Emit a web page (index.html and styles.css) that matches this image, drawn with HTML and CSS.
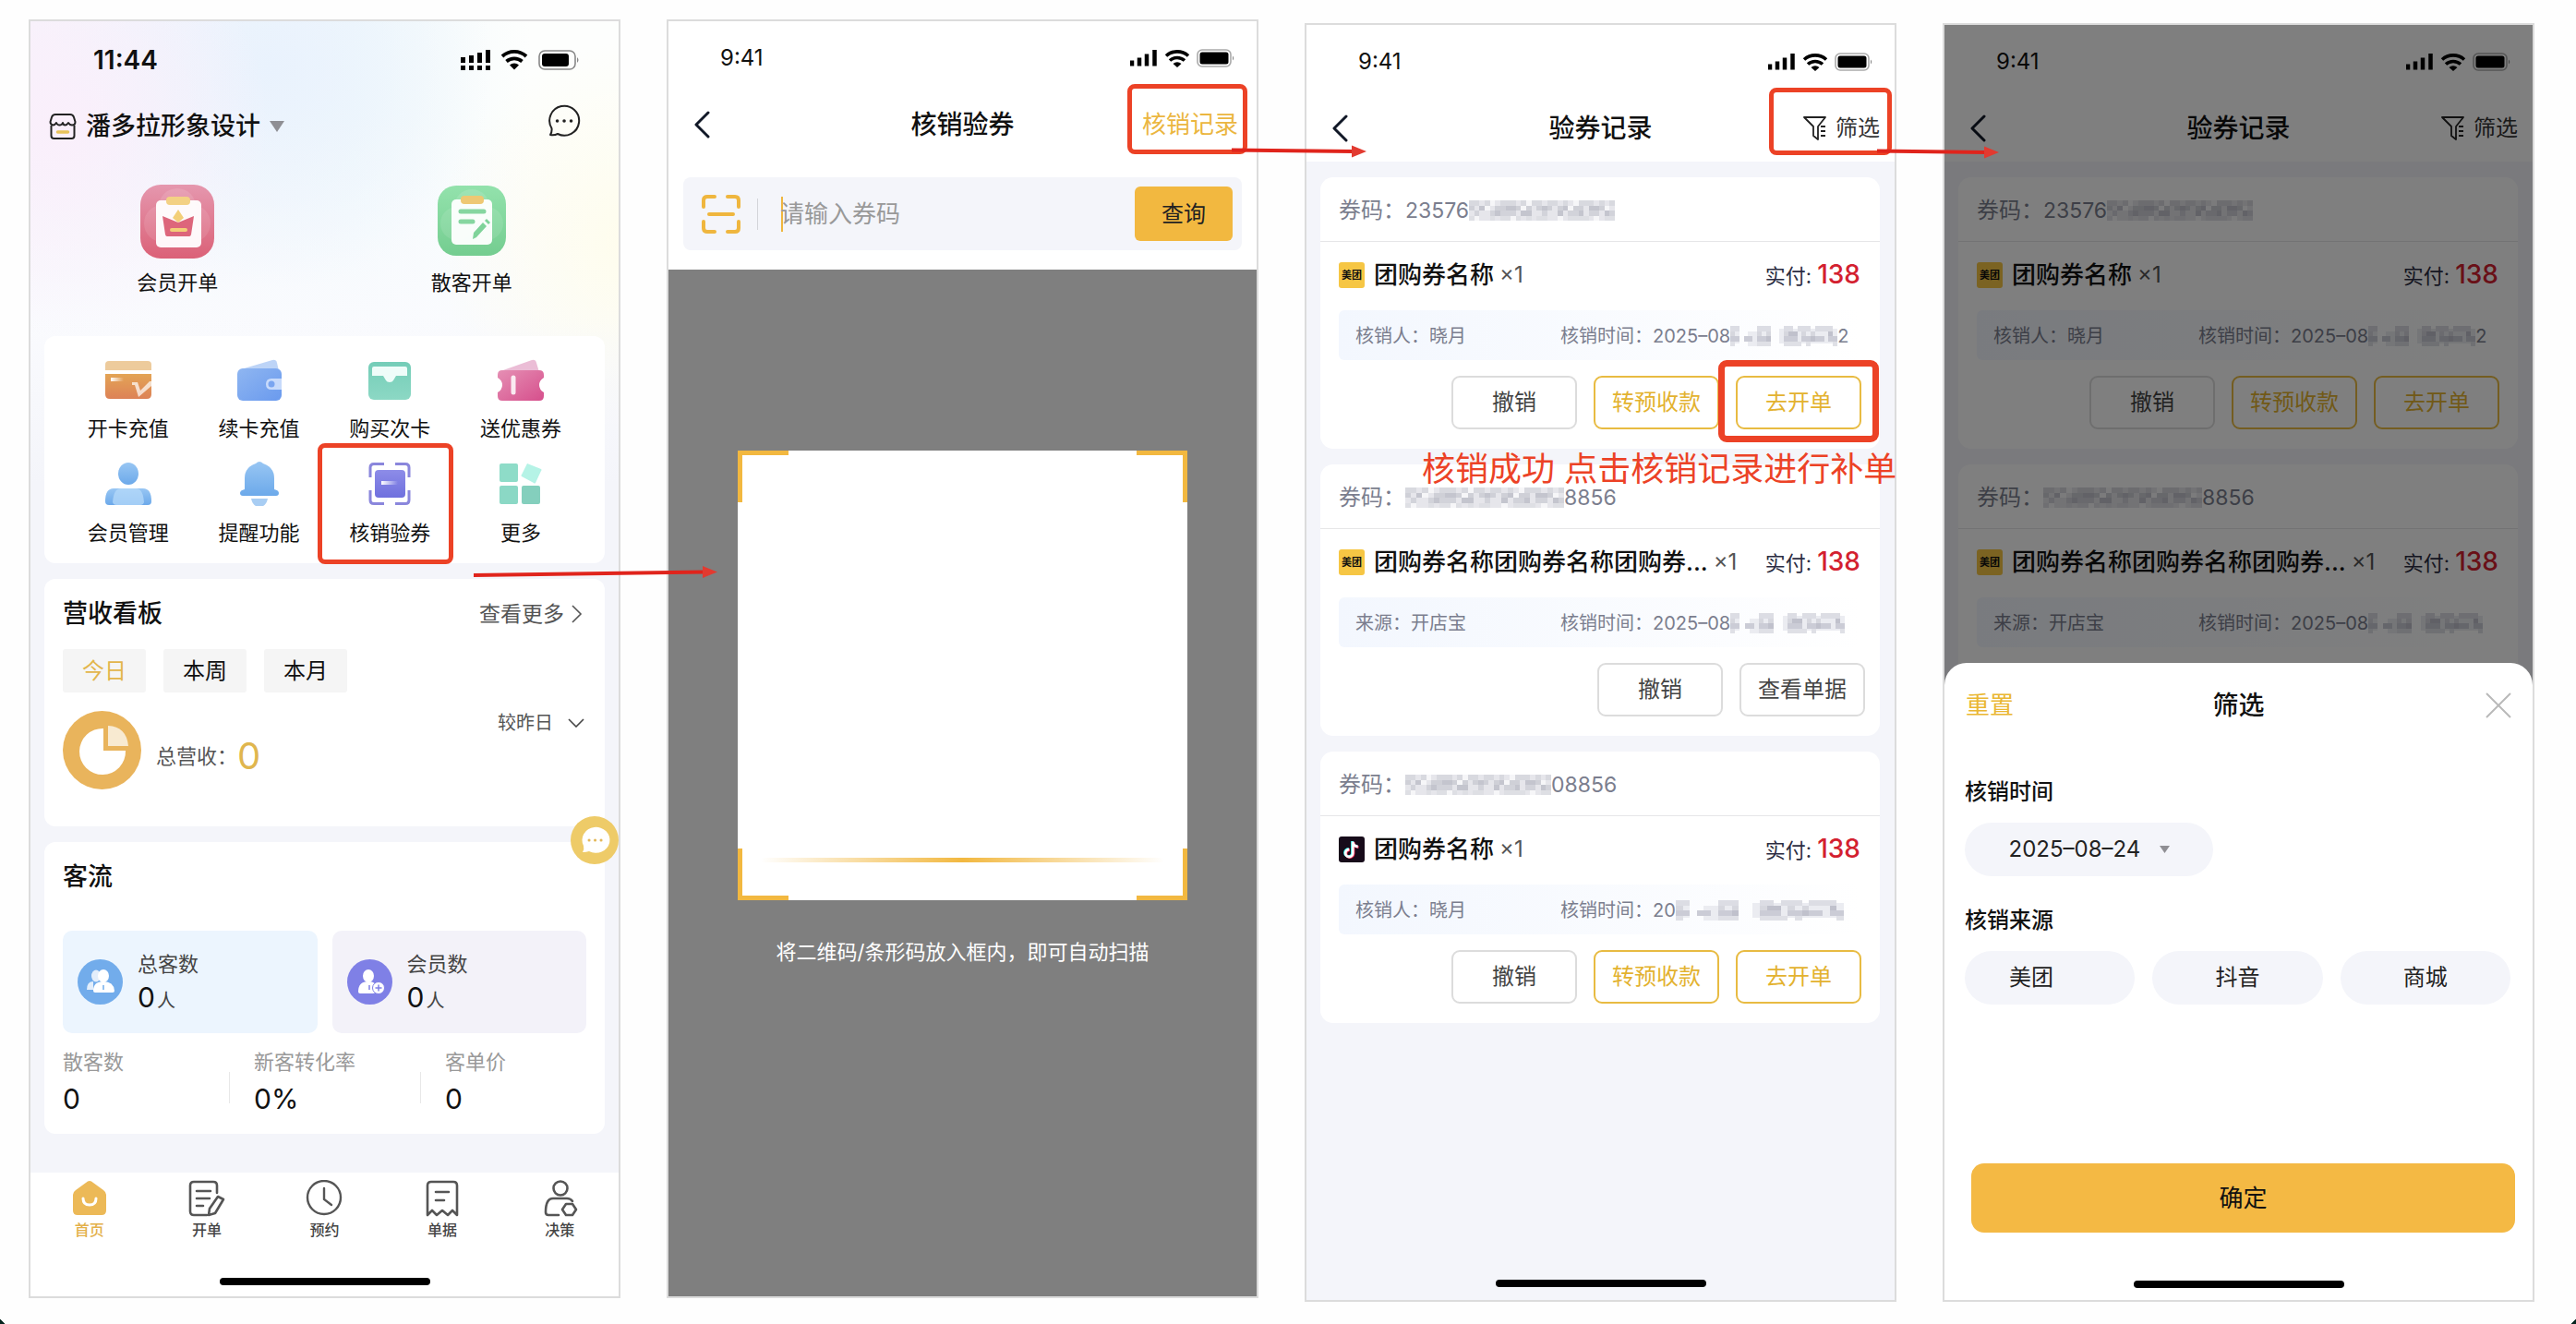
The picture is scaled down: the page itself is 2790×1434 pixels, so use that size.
FILE: index.html
```html
<!DOCTYPE html>
<html lang="zh-CN">
<head>
<meta charset="utf-8">
<meta name="viewport" content="width=device-width, initial-scale=1">
<title>核销验券流程</title>
<link rel="stylesheet" href="styles.css">
</head>
<body>
<svg class="sprite" aria-hidden="true">
  <defs>
    <linearGradient id="g-red" x1="0" y1="0" x2="0" y2="1"><stop offset="0" stop-color="#e597ae"/><stop offset="1" stop-color="#db6177"/></linearGradient>
    <linearGradient id="g-green" x1="0" y1="0" x2="0" y2="1"><stop offset="0" stop-color="#93e2ac"/><stop offset="1" stop-color="#74cd90"/></linearGradient>
    <linearGradient id="g-orange" x1="0" y1="0" x2="0" y2="1"><stop offset="0" stop-color="#e3a455"/><stop offset="1" stop-color="#dd8257"/></linearGradient>
    <linearGradient id="g-blue" x1="0" y1="0" x2="1" y2="1"><stop offset="0" stop-color="#8fb6f1"/><stop offset="1" stop-color="#6a9aee"/></linearGradient>
    <linearGradient id="g-teal" x1="0" y1="0" x2="0" y2="1"><stop offset="0" stop-color="#74cdb8"/><stop offset="1" stop-color="#8cd8c4"/></linearGradient>
    <linearGradient id="g-pink" x1="0" y1="0" x2="1" y2="1"><stop offset="0" stop-color="#e58fb4"/><stop offset="1" stop-color="#d64f8c"/></linearGradient>
    <linearGradient id="g-sky" x1="0" y1="0" x2="0" y2="1"><stop offset="0" stop-color="#98c6f3"/><stop offset="1" stop-color="#6ca9ea"/></linearGradient>
    <linearGradient id="g-violet" x1="0" y1="0" x2="0" y2="1"><stop offset="0" stop-color="#8d8ce8"/><stop offset="1" stop-color="#6f70de"/></linearGradient>
    <linearGradient id="g-fade" x1="0" y1="0" x2="1" y2="0"><stop offset="0" stop-color="#fff"/><stop offset="1" stop-color="#fff" stop-opacity="0"/></linearGradient>
  </defs>
  <symbol id="i-status" viewBox="0 0 114 20">
    <path d="M2 12.500v6M10 9.500v9M18 5.500v13M26.500 1v17.500" stroke="#000" stroke-width="4.500" fill="none"/>
    <path d="M39 7.500a18 18 0 0 1 24 0M43 12.500a12 12 0 0 1 16 0" stroke="#000" stroke-width="3.600" fill="none"/>
    <path d="M46.500 16a7 7 0 0 1 9 0L51 20z"/>
    <rect x="73" y="1" width="36" height="18" rx="5" fill="none" stroke="#aaa" stroke-width="1.600"/>
    <rect x="75.500" y="3.500" width="31" height="13" rx="2.500"/>
    <path d="M111 7.500q2.500 2.500 0 5z" fill="#888"/>
  </symbol>
  <symbol id="i-back" viewBox="0 0 18 30"><path d="M16 2 3 15l13 13" fill="none" stroke="#111827" stroke-width="3" stroke-linecap="round" stroke-linejoin="round"/></symbol>
  <symbol id="i-filter" viewBox="0 0 26 28"><path d="M1 2h23l-8 10v14l-5-4V12zM19 12h5M19 17h5M19 22h5" fill="none" stroke="#222" stroke-width="1.800" stroke-linejoin="round"/></symbol>
  <symbol id="i-meituan" viewBox="0 0 28 28">
    <rect width="28" height="28" rx="3" fill="#f6c644"/>
  </symbol>
  <symbol id="i-douyin" viewBox="0 0 28 28">
    <rect width="28" height="28" rx="3" fill="#170b1a"/>
    <g fill="none" stroke-width="2.800"><path d="M14.500 5v12.500a4 4 0 1 1-4-4M14.500 5.500q.5 4.500 5.500 5" stroke="#25f4ee"/><path d="M16 6v12.500a4 4 0 1 1-4-4M16 6.500q.5 4.500 5.500 5" stroke="#fe2c55"/><path d="M15.200 5.500V18a4 4 0 1 1-4-4M15.200 6q.5 4.500 5.500 5" stroke="#fff"/></g>
  </symbol>
  <symbol id="m-code" viewBox="0 0 28 4" preserveAspectRatio="none">
    <g fill="none" shape-rendering="crispEdges">
      <path d="M0 2h28" stroke="#e6e6eb" stroke-width="4"/>
      <path d="M0 .5h28" stroke="#d8d9df" stroke-dasharray="2 1 1 2 3 1 1 1 2 1"/>
      <path d="M0 1.500h28" stroke="#cfd0d7" stroke-dasharray="1 1 2 1 2 2 3 1 1 1"/>
      <path d="M1 2.500h27" stroke="#d2d3da" stroke-dasharray="1 2 1 1 3 1 2 2"/>
      <path d="M0 3.500h28" stroke="#dedfe4" stroke-dasharray="2 2 1 1 4 1 1 1"/>
      <path d="M2 1.500h26M5 2.500h22" stroke="#c4c5ce" stroke-dasharray="1 4 2 5 1 3"/>
      <path d="M4 .5h23M1 3.500h26M3 1.500h24" stroke="#f6f6f8" stroke-dasharray="1 6 1 8"/>
    </g>
  </symbol>
  <symbol id="m-time" viewBox="0 0 24 4" preserveAspectRatio="none">
    <g fill="none" shape-rendering="crispEdges">
      <path d="M0 2h2M4 2.500h5M11 2h13" stroke="#ebecf1" stroke-width="3"/>
      <path d="M0 .5h24" stroke="#dcdde4" stroke-dasharray="2 4 3 3 2 1 3 1 4 1"/>
      <path d="M0 1.500h24" stroke="#d6d7de" stroke-dasharray="1 5 1 1 1 3 3 1 1 1"/>
      <path d="M0 2.500h24" stroke="#cbccd6" stroke-dasharray="2 1 2 1 3 3 3 1 2 1"/>
      <path d="M0 3.500h24" stroke="#dfe0e6" stroke-dasharray="1 5 3 3 4 1"/>
      <path d="M8 2.500h1M13 1.500h2M18 2.500h1M22 1.500h1" stroke="#c0c1cc"/>
    </g>
  </symbol>
</svg>

<main class="board">

  <!-- 首页 -->
  <section class="phone phone--early home" aria-label="首页">
    <div class="status status--home">
      <span class="status__time status__time--bold">11:44</span>
      <svg width="130" height="24" viewBox="0 0 130 24" aria-hidden="true">
        <path d="M2.500 9v6M11.500 7v8M20.500 4v11M29.500 1v14" stroke="#000" stroke-width="5" stroke-linecap="butt"/>
        <path d="M2.500 18v5M11.500 18v5M20.500 18v5M29.500 18v5" stroke="#000" stroke-width="5"/>
        <path d="M45 8a19 19 0 0 1 26 0M49.500 13.500a13 13 0 0 1 17 0" stroke="#000" stroke-width="3.800" fill="none"/>
        <path d="M53 17.500a7 7 0 0 1 10 0L58 22.500z"/>
        <rect x="85" y="2" width="39" height="20" rx="6" fill="none" stroke="#888" stroke-width="1.600"/>
        <rect x="88" y="5" width="29" height="14" rx="3"/>
        <path d="M126 9q3 3 0 6z" fill="#888"/>
      </svg>
    </div>
    <div class="shop">
      <label class="shop__pick">
        <svg width="30" height="30" viewBox="0 0 30 30" fill="none" stroke="#222" stroke-width="2" stroke-linejoin="round" aria-hidden="true"><path d="M7 2h16q3 0 4 3l1.500 5q0 3.500-3.500 3.500-2.500 0-4-2.500-1.500 2.500-3.500 2.500T15 11q-1 2.500-3.500 2.500T8 11q-1.500 2.500-3.500 2.500Q1.500 13 1.500 10L3 5q1-3 4-3z"/><path d="M2.500 14v11q0 3 3 3h19q3 0 3-3V14"/><path d="M9.500 21h11" stroke="#e8c35c" stroke-width="3.500" stroke-linecap="round"/></svg>
        <select class="select shop__name" aria-label="门店"><option>潘多拉形象设计</option></select>
        <svg width="16" height="12" viewBox="0 0 16 12" aria-hidden="true"><path d="M0 0h16L8 12z" fill="#8f8f94"/></svg>
      </label>
      <button class="plain" aria-label="消息">
        <svg width="36" height="36" viewBox="0 0 36 36" fill="none" stroke="#222" stroke-width="2" stroke-linejoin="round"><path d="M3 33q2-3 1.500-7A16 16 0 1 1 11 32q-4 2-8 1z"/><path d="M10.500 18h.1M18 18h.1M25.500 18h.1" stroke-width="3.500" stroke-linecap="round"/></svg>
      </button>
    </div>
    <nav class="heroes" aria-label="开单">
      <a class="hero" href="#member">
        <svg width="80" height="80" viewBox="0 0 80 80" aria-hidden="true"><rect width="80" height="80" rx="22" fill="url(#g-red)"/><circle cx="40" cy="24" r="20" fill="#fff" opacity=".12"/><circle cx="24" cy="42" r="20" fill="#fff" opacity=".1"/><circle cx="56" cy="42" r="20" fill="#fff" opacity=".1"/><rect x="17" y="17" width="49" height="51" rx="5" fill="#fff" opacity=".95"/><rect x="28" y="13" width="26" height="9" rx="4" fill="#f3d184"/><path d="m41 27 6 9-6 5-6-5z" fill="#f3cf78"/><path d="M24 34l17 7 17-7-3 20q-.5 2-2 2H29q-1.500 0-2-2z" fill="#dd667b"/><path d="M34 49h15" stroke="#f3cf78" stroke-width="4" stroke-linecap="round"/></svg>
        <span class="label">会员开单</span>
      </a>
      <a class="hero" href="#walk-in">
        <svg width="80" height="80" viewBox="0 0 80 80" aria-hidden="true"><rect x="3" y="1" width="74" height="76" rx="20" fill="url(#g-green)"/><circle cx="40" cy="24" r="19" fill="#fff" opacity=".12"/><circle cx="24" cy="42" r="18" fill="#fff" opacity=".1"/><circle cx="56" cy="42" r="18" fill="#fff" opacity=".1"/><rect x="18" y="16" width="44" height="49" rx="5" fill="#fff" opacity=".95"/><rect x="28" y="12" width="25" height="9" rx="4" fill="#eec873"/><path d="M28 29h25M28 40h13" stroke="#86d6a0" stroke-width="5" stroke-linecap="round"/><path d="m41 59 1-7 10-11 4 4-11 12zM54 39l2-2 4 4-2 2z" fill="#7fd39a"/></svg>
        <span class="label">散客开单</span>
      </a>
    </nav>

    <nav class="card tiles" aria-label="功能">
      <a class="tile" href="#open-card"><svg width="52" height="48" viewBox="0 0 52 48" aria-hidden="true"><path d="M1 14V8q0-4 4-4h42q4 0 4 4v6z" fill="#edcb9c"/><path d="M1 18h50v22q0 5-5 5H6q-5 0-5-5z" fill="url(#g-orange)"/><path d="M7 22h14v4H7z" fill="url(#g-fade)"/><path d="M30 27h6l3 9 10-10h2v5L37 43l-4-13h-3z" fill="#fff" opacity=".7"/></svg><span class="label">开卡充值</span></a>
      <a class="tile" href="#renew"><svg width="52" height="48" viewBox="0 0 52 48" aria-hidden="true"><path d="M6 13 40 3q4-1 5 3l2 9H4z" fill="#bdd4f7"/><rect x="2" y="12" width="48" height="35" rx="6" fill="url(#g-blue)"/><path d="M50 23H39q-6 0-6 6t6 6h11z" fill="#d6e4fd" opacity=".85"/><circle cx="39" cy="29" r="3.500" fill="#7aa5f0"/></svg><span class="label">续卡充值</span></a>
      <a class="tile" href="#times-card"><svg width="52" height="48" viewBox="0 0 52 48" aria-hidden="true"><rect x="3" y="5" width="46" height="41" rx="6" fill="url(#g-teal)"/><path d="M7 12q0-2 2-2h34q2 0 2 2v8H33l-3 5q-1 2-4 2t-4-2l-3-5H7z" fill="#effcf9"/></svg><span class="label">购买次卡</span></a>
      <a class="tile" href="#coupon"><svg width="52" height="48" viewBox="0 0 52 48" aria-hidden="true"><path d="M4 15 38 3q4-1 5 3l3 10z" fill="#ebbdd6"/><path d="M6 14h40q5 0 5 5v3q-5 3-5 8t5 8v4q0 5-5 5H6q-5 0-5-5v-4q5-3 5-8t-5-8v-3q0-5 5-5z" fill="url(#g-pink)"/><path d="M18 22v16" stroke="#fff" stroke-width="5" stroke-linecap="round" opacity=".85"/></svg><span class="label">送优惠券</span></a>
      <a class="tile" href="#members"><svg width="52" height="48" viewBox="0 0 52 48" aria-hidden="true"><ellipse cx="26" cy="13" rx="11" ry="12" fill="url(#g-sky)"/><path d="M1 43q0-14 9-14h32q9 0 9 14 0 4-4 4H5q-4 0-4-4z" fill="url(#g-sky)"/><path d="M9 44q1-15 9-15h16q8 0 9 15-1 3-4 3H13q-3 0-4-3z" fill="#b6dafa" opacity=".75"/></svg><span class="label">会员管理</span></a>
      <a class="tile" href="#remind"><svg width="52" height="48" viewBox="0 0 52 48" aria-hidden="true"><path d="M17 40h18q-2 9-9 9t-9-9z" fill="#a8cdf3"/><path d="M10 30V18Q10 6 22 2q4-4 8 0 12 4 12 16v12q5 1 5 4t-3 3H8q-3 0-3-3t5-4z" fill="url(#g-sky)"/></svg><span class="label">提醒功能</span></a>
      <a class="tile tile--marked" href="#verify"><svg width="52" height="48" viewBox="0 0 52 48" aria-hidden="true"><path d="M20 2.500H9q-4 0-4 4V17M32 2.500h11q4 0 4 4V17M20 45.500H9q-4 0-4-4V31M32 45.500h11q4 0 4-4V31" fill="none" stroke="#8a86dc" stroke-width="3"/><rect x="10" y="9" width="33" height="30" rx="4" fill="url(#g-violet)"/><path d="M17 21h18v4H17z" fill="url(#g-fade)"/></svg><span class="label">核销验券</span></a>
      <a class="tile" href="#more"><svg width="52" height="48" viewBox="0 0 52 48" aria-hidden="true"><rect x="3" y="2" width="20" height="20" rx="2" fill="#8edcc8"/><rect x="3" y="26" width="20" height="20" rx="2" fill="#8bd8c5"/><rect x="27" y="26" width="20" height="20" rx="2" fill="#84cfbd"/><path d="m33 2 15 6q1 1 0 2l-6 13q-1 1-2 0L27 16q-1-1 0-2z" fill="#b5f3e6"/></svg><span class="label">更多</span></a>
    </nav>

    <section class="card">
      <header class="card__head">
        <h2 class="card__title">营收看板</h2>
        <a class="more" href="#revenue">查看更多<svg width="12" height="20" viewBox="0 0 12 20" aria-hidden="true"><path d="m1 1 9 9-9 9" fill="none" stroke="#555" stroke-width="1.600"/></svg></a>
      </header>
      <div class="range">
        <button class="range__btn range__btn--on">今日</button>
        <button class="range__btn">本周</button>
        <button class="range__btn">本月</button>
      </div>
      <div class="revenue">
        <svg width="85" height="85" viewBox="0 0 85 85" aria-hidden="true"><circle cx="42.500" cy="42.500" r="42.500" fill="#e9b45c"/><path d="M44 19a25 25 0 1 0 24 24H44z" fill="#fff"/><path d="M49 16q20 1 22 22H49z" fill="#f8ead1"/></svg>
        <p class="revenue__sum">总营收：<strong class="revenue__num">0</strong></p>
        <label class="compare"><select class="select" aria-label="对比"><option>较昨日</option></select><svg width="18" height="10" viewBox="0 0 18 10" aria-hidden="true"><path d="m1 1 8 8 8-8" fill="none" stroke="#444" stroke-width="1.600"/></svg></label>
      </div>
    </section>

    <section class="card">
      <h2 class="card__title">客流</h2>
      <div class="counts">
        <div class="count">
          <svg width="49" height="49" viewBox="0 0 49 49" aria-hidden="true"><circle cx="24.500" cy="24.500" r="24.500" fill="#72aceb"/><g fill="#fff"><ellipse cx="20" cy="18" rx="5" ry="6.500" opacity=".8"/><path d="M10 33q0-9 7-9v9z" opacity=".8"/><ellipse cx="28" cy="18" rx="6" ry="7"/><path d="M17 34q0-10 11-10t12 10q0 2-2 2H19q-2 0-2-2z"/></g><path d="M28 28v5" stroke="#72aceb" stroke-width="1.500"/></svg>
          <dl class="count__text"><dt>总客数</dt><dd><span class="count__num">0</span>人</dd></dl>
        </div>
        <div class="count count--violet">
          <svg width="49" height="49" viewBox="0 0 49 49" aria-hidden="true"><circle cx="24.500" cy="24.500" r="24.500" fill="#7f80e6"/><g fill="#fff"><ellipse cx="23" cy="18" rx="6" ry="7"/><path d="M12 35q0-11 11-11t8 12l-3 1H14q-2 0-2-2z"/><circle cx="34" cy="31" r="6.500" stroke="#7f80e6"/></g><path d="M34 27.500v7M30.500 31h7M24 28v5" stroke="#7f80e6" stroke-width="1.500"/></svg>
          <dl class="count__text"><dt>会员数</dt><dd><span class="count__num">0</span>人</dd></dl>
        </div>
      </div>
      <dl class="figures">
        <div class="figure"><dt>散客数</dt><dd>0</dd></div>
        <div class="figure"><dt>新客转化率</dt><dd>0%</dd></div>
        <div class="figure"><dt>客单价</dt><dd>0</dd></div>
      </dl>
    </section>

    <button class="plain service" aria-label="客服">
      <svg width="52" height="52" viewBox="0 0 52 52"><circle cx="26" cy="26" r="26" fill="#eecb68"/><path d="M13 39q2-3 1-7a15 14 0 1 1 6 6q-3 1-7 1z" fill="#fff"/><path d="M20 26h.1M26.500 26h.1M33 26h.1" stroke="#e3b85a" stroke-width="3" stroke-linecap="round"/></svg>
    </button>

    <div class="dock">
      <nav class="tabs" aria-label="主导航">
        <a class="tab tab--on" href="#home"><svg width="38" height="40" viewBox="0 0 38 40" aria-hidden="true"><path d="M15 3q4-4 8 0l11 8q3 2 3 5v17q0 5-5 5H6q-5 0-5-5V16q0-3 3-5z" fill="#ecb957"/><path d="M12 20q0 7 7 7t7-7" fill="none" stroke="#fff" stroke-width="3" stroke-linecap="round"/></svg>首页</a>
        <a class="tab" href="#bill"><svg width="40" height="40" viewBox="0 0 40 40" fill="none" stroke="#555" stroke-width="2.600" stroke-linecap="round" stroke-linejoin="round" aria-hidden="true"><path d="M20 38H6q-4 0-4-4V6q0-4 4-4h21q4 0 4 4v8M9 12h15M9 20h14M9 28h7"/><path d="m32 18 6 3-9 15-7 2 1-7z"/></svg>开单</a>
        <a class="tab" href="#booking"><svg width="40" height="40" viewBox="0 0 40 40" fill="none" stroke="#555" stroke-width="2.400" stroke-linecap="round" aria-hidden="true"><circle cx="20" cy="19" r="18"/><path d="M20 9v12l8 6"/></svg>预约</a>
        <a class="tab" href="#receipt"><svg width="40" height="40" viewBox="0 0 40 40" fill="none" stroke="#555" stroke-width="2.600" stroke-linecap="round" stroke-linejoin="round" aria-hidden="true"><path d="M4 38V6q0-4 4-4h24q4 0 4 4v32l-5-5-5 5-6-5-6 5-5-5zM13 13h14M13 22h9"/></svg>单据</a>
        <a class="tab" href="#decision"><svg width="40" height="40" viewBox="0 0 40 40" fill="none" stroke="#555" stroke-width="2.600" stroke-linecap="round" stroke-linejoin="round" aria-hidden="true"><circle cx="21" cy="9" r="7.500"/><path d="M19 38H8q-3 0-3-3 0-15 8-15h15q4 0 6 3"/><path d="M27 26h7l4 6-4 6h-7l-4-6z"/></svg>决策</a>
      </nav>
      <div class="home-bar"></div>
    </div>

    <svg class="arrow arrow--one" width="264" height="16" viewBox="0 0 264 16" aria-hidden="true"><path d="M0 10 250 6.500" stroke="#e0241c" stroke-width="4"/><path d="m248 0 16 6.500L248 13z" fill="#e23a30"/></svg>
  </section>

  <!-- 核销验券 -->
  <section class="phone phone--early scan" aria-label="核销验券">
    <div class="status"><span class="status__time">9:41</span><svg width="114" height="20" aria-hidden="true"><use href="#i-status"/></svg></div>
    <header class="bar">
      <button class="plain" aria-label="返回"><svg width="18" height="30"><use href="#i-back"/></svg></button>
      <h1 class="bar__title">核销验券</h1>
      <a class="bar__link" href="#records">核销记录</a>
    </header>
    <form class="search">
      <svg width="42" height="42" viewBox="0 0 42 42" fill="none" stroke="#efb63e" stroke-width="4" stroke-linecap="round" aria-hidden="true"><path d="M14 2H6Q2 2 2 6v7M28 2h8q4 0 4 4v7M14 40H6q-4 0-4-4v-7M28 40h8q4 0 4-4v-7M8 21h26"/></svg>
      <span class="search__rule"></span>
      <span class="search__caret"></span>
      <input class="search__input" type="text" placeholder="请输入券码" aria-label="券码">
      <button class="search__go" type="button">查询</button>
    </form>
    <div class="camera">
      <div class="finder">
        <i class="finder__corner finder__corner--tl"></i><i class="finder__corner finder__corner--tr"></i>
        <i class="finder__corner finder__corner--bl"></i><i class="finder__corner finder__corner--br"></i>
        <i class="finder__beam"></i>
      </div>
      <p class="camera__tip">将二维码/条形码放入框内，即可自动扫描</p>
    </div>
    <span class="mark mark--records"></span>
    <svg class="arrow arrow--two" width="146" height="16" viewBox="0 0 146 16" aria-hidden="true"><path d="M0 6.500 132 8" stroke="#e0241c" stroke-width="4"/><path d="m130 1.500 16 6.500-16 6.500z" fill="#e23a30"/></svg>
  </section>

  <!-- 验券记录 -->
  <section class="phone phone--late records" aria-label="验券记录">
    <div class="top">
      <div class="status"><span class="status__time">9:41</span><svg width="114" height="20" aria-hidden="true"><use href="#i-status"/></svg></div>
      <header class="bar">
        <button class="plain" aria-label="返回"><svg width="18" height="30"><use href="#i-back"/></svg></button>
        <h1 class="bar__title">验券记录</h1>
        <button class="plain bar__filter"><svg width="26" height="28" aria-hidden="true"><use href="#i-filter"/></svg>筛选</button>
      </header>
    </div>
    <div class="list">
      <article class="ticket">
        <p class="ticket__code">券码：<span class="digits">23576</span><svg width="158" height="22"><use href="#m-code"/></svg></p>
        <div class="ticket__row"><span class="logo"><svg width="28" height="28" aria-hidden="true"><use href="#i-meituan"/></svg><b class="logo__text">美团</b></span><h3 class="ticket__name">团购券名称</h3><span class="ticket__qty">×1</span><span class="ticket__paid">实付: <strong>138</strong></span></div>
        <div class="ticket__info"><span>核销人：晓月</span><span class="ticket__time">核销时间：<span>2025–08</span><svg width="116" height="22"><use href="#m-time"/></svg><span>2</span></span></div>
        <div class="ticket__actions"><button class="btn">撤销</button><button class="btn btn--gold">转预收款</button><button class="btn btn--gold btn--marked">去开单</button></div>
      </article>
      <article class="ticket">
        <p class="ticket__code">券码：<svg width="172" height="22"><use href="#m-code"/></svg><span class="digits">8856</span></p>
        <div class="ticket__row"><span class="logo"><svg width="28" height="28" aria-hidden="true"><use href="#i-meituan"/></svg><b class="logo__text">美团</b></span><h3 class="ticket__name">团购券名称团购券名称团购券...</h3><span class="ticket__qty">×1</span><span class="ticket__paid">实付: <strong>138</strong></span></div>
        <div class="ticket__info"><span>来源：开店宝</span><span class="ticket__time">核销时间：<span>2025–08</span><svg width="124" height="22"><use href="#m-time"/></svg></span></div>
        <div class="ticket__actions ticket__actions--done"><button class="btn">撤销</button><button class="btn">查看单据</button></div>
      </article>
      <article class="ticket">
        <p class="ticket__code">券码：<svg width="158" height="22"><use href="#m-code"/></svg><span class="digits">08856</span></p>
        <div class="ticket__row"><svg width="28" height="28" aria-hidden="true"><use href="#i-douyin"/></svg><h3 class="ticket__name">团购券名称</h3><span class="ticket__qty">×1</span><span class="ticket__paid">实付: <strong>138</strong></span></div>
        <div class="ticket__info"><span>核销人：晓月</span><span class="ticket__time">核销时间：<span>20</span><svg width="182" height="22"><use href="#m-time"/></svg></span></div>
        <div class="ticket__actions"><button class="btn">撤销</button><button class="btn btn--gold">转预收款</button><button class="btn btn--gold">去开单</button></div>
      </article>
    </div>
    <div class="home-bar"></div>
    <p class="note">核销成功 点击核销记录进行补单</p>
    <span class="mark mark--filter"></span>
    <svg class="arrow arrow--three" width="132" height="16" viewBox="0 0 132 16" aria-hidden="true"><path d="M0 6.500 118 8" stroke="#e0241c" stroke-width="4"/><path d="m116 1.500 16 6.500-16 6.500z" fill="#e23a30"/></svg>
  </section>

  <!-- 筛选 -->
  <section class="phone phone--late records records--dim" aria-label="筛选">
    <div class="top">
      <div class="status"><span class="status__time">9:41</span><svg width="114" height="20" aria-hidden="true"><use href="#i-status"/></svg></div>
      <header class="bar">
        <button class="plain" aria-label="返回"><svg width="18" height="30"><use href="#i-back"/></svg></button>
        <h1 class="bar__title">验券记录</h1>
        <button class="plain bar__filter"><svg width="26" height="28" aria-hidden="true"><use href="#i-filter"/></svg>筛选</button>
      </header>
    </div>
    <div class="list">
      <article class="ticket">
        <p class="ticket__code">券码：<span class="digits">23576</span><svg width="158" height="22"><use href="#m-code"/></svg></p>
        <div class="ticket__row"><span class="logo"><svg width="28" height="28" aria-hidden="true"><use href="#i-meituan"/></svg><b class="logo__text">美团</b></span><h3 class="ticket__name">团购券名称</h3><span class="ticket__qty">×1</span><span class="ticket__paid">实付: <strong>138</strong></span></div>
        <div class="ticket__info"><span>核销人：晓月</span><span class="ticket__time">核销时间：<span>2025–08</span><svg width="116" height="22"><use href="#m-time"/></svg><span>2</span></span></div>
        <div class="ticket__actions"><button class="btn">撤销</button><button class="btn btn--gold">转预收款</button><button class="btn btn--gold">去开单</button></div>
      </article>
      <article class="ticket ticket--cut">
        <p class="ticket__code">券码：<svg width="172" height="22"><use href="#m-code"/></svg><span class="digits">8856</span></p>
        <div class="ticket__row"><span class="logo"><svg width="28" height="28" aria-hidden="true"><use href="#i-meituan"/></svg><b class="logo__text">美团</b></span><h3 class="ticket__name">团购券名称团购券名称团购券...</h3><span class="ticket__qty">×1</span><span class="ticket__paid">实付: <strong>138</strong></span></div>
        <div class="ticket__info"><span>来源：开店宝</span><span class="ticket__time">核销时间：<span>2025–08</span><svg width="124" height="22"><use href="#m-time"/></svg></span></div>
      </article>
    </div>
    <div class="shade"></div>
    <form class="sheet">
      <header class="sheet__head">
        <button class="plain sheet__reset" type="reset">重置</button>
        <h2 class="bar__title">筛选</h2>
        <button class="plain" type="button" aria-label="关闭"><svg width="28" height="28" viewBox="0 0 28 28"><path d="m1 1 26 26M27 1 1 27" stroke="#b9b9b9" stroke-width="2"/></svg></button>
      </header>
      <h3 class="sheet__label">核销时间</h3>
      <label class="pill pill--date"><select class="select" aria-label="核销时间"><option>2025–08–24</option></select><svg width="11" height="8" viewBox="0 0 11 8" aria-hidden="true"><path d="M0 0h11L5.500 8z" fill="#8f8f94"/></svg></label>
      <h3 class="sheet__label">核销来源</h3>
      <div class="sources">
        <label class="pill pill--first"><input class="pill__box" type="checkbox">美团</label>
        <label class="pill"><input class="pill__box" type="checkbox">抖音</label>
        <label class="pill"><input class="pill__box" type="checkbox">商城</label>
      </div>
      <button class="confirm" type="button">确定</button>
      <div class="home-bar"></div>
    </form>
  </section>
</main>
</body>
</html>
```
FILE: styles.css
```css
* { box-sizing: border-box; }

body {
  margin: 0;
  background: #fefefe;
  color: #111;
  font: 24px/30px Inter, "Noto Sans CJK SC", sans-serif;
}

h1, h2, h3, p, dl, dd { margin: 0; font-weight: 400; }
a { color: inherit; text-decoration: none; }
svg { display: block; flex: none; }
button, input, select { font: inherit; color: inherit; }
button { padding: 0; border: 0; cursor: pointer; }
.plain { background: none; }
.sprite { position: absolute; width: 0; height: 0; }

.select {
  padding: 0;
  border: 0;
  background: none;
  appearance: none;
}

/* Board with four screens */
.board {
  position: relative;
  display: grid;
  grid-template-columns: repeat(4, minmax(0, 1fr));
  gap: 50px;
  min-height: 100vh;
  padding: 21px 45px 24px 31px;
  overflow: hidden;
}
.board::before,
.board::after {
  content: "";
  position: absolute;
  bottom: 0;
  width: 6px;
  height: 5px;
}
.board::before { left: 0; background: linear-gradient(45deg, #06251f 50%, transparent 50%); }
.board::after { right: 0; background: linear-gradient(-45deg, #06251f 50%, transparent 50%); }

.phone {
  position: relative;
  display: flex;
  flex-direction: column;
  border: 2px solid #dcdcdc;
  background: #fff;
}
.phone--early { margin-bottom: 4px; }
.phone--late { margin-top: 4px; }

.status {
  display: flex;
  align-items: center;
  justify-content: space-between;
  height: 80px;
  padding: 0 23px 0 56px;
}
.status--home { height: 84px; padding: 0 41px 0 68px; }
.status__time { font-size: 24px; }
.status__time--bold { font-size: 28px; font-weight: 600; }

.home-bar {
  width: 228px;
  height: 8px;
  margin: 0 auto 12px;
  border-radius: 4px;
  background: #000;
}

/* Red annotations */
.mark {
  position: absolute;
  border: 5px solid #ec4226;
  border-radius: 8px;
  pointer-events: none;
}
.mark--records { top: 68px; right: 10px; width: 130px; height: 76px; }
.mark--filter { top: 68px; right: 3px; width: 133px; height: 73px; }
.arrow { position: absolute; z-index: 2; pointer-events: none; }
.arrow--one { top: 590px; left: 480px; }
.arrow--two { top: 133px; left: 610px; }
.arrow--three { top: 130px; left: 618px; }
.note {
  position: absolute;
  top: 456px;
  left: 125px;
  z-index: 1;
  color: #ec4226;
  font-size: 36px;
  line-height: 50px;
  white-space: nowrap;
}

/* Home */
.home {
  background:
    linear-gradient(to bottom, transparent 320px, #f4f5fa 500px),
    radial-gradient(circle at 30px 110px, #faeffb, transparent 230px),
    radial-gradient(circle at 260px 50px, #e9f2fd, transparent 240px),
    radial-gradient(circle at 660px 240px, #fffdec, transparent 220px),
    linear-gradient(to bottom, transparent 100px, #fafbfe 340px),
    linear-gradient(to right, #f6f3fb, #f1f9fc 55%, #fdfefd 85%);
}
.shop {
  display: flex;
  align-items: flex-start;
  justify-content: space-between;
  height: 60px;
  padding: 6px 41px 0 20px;
}
.shop__pick { display: flex; align-items: center; gap: 10px; height: 48px; }
.shop__name { font-size: 27px; font-weight: 500; }
.heroes {
  display: grid;
  grid-template-columns: 1fr 1fr;
  padding: 33px 0 43px;
}
.hero { display: flex; flex-direction: column; align-items: center; gap: 11px; }
.label { font-size: 22px; line-height: 30px; }

.card {
  margin: 0 15px 17px;
  padding: 18px 20px;
  border-radius: 12px;
  background: #fff;
}
.card__head { display: flex; justify-content: space-between; align-items: center; }
.card__title { font-size: 27px; font-weight: 500; line-height: 40px; }
.more { display: flex; align-items: center; gap: 8px; padding-right: 4px; color: #555; font-size: 23px; }

.tiles {
  display: grid;
  grid-template-columns: repeat(4, 1fr);
  gap: 21px 0;
  padding-top: 23px;
}
.tile {
  position: relative;
  display: flex;
  flex-direction: column;
  align-items: center;
  gap: 14px;
}
.tile--marked::after {
  content: "";
  position: absolute;
  inset: -20px 2px -19px -8px;
  border: 5px solid #ec4226;
  border-radius: 8px;
}

.range { display: flex; gap: 19px; margin: 18px 0 20px; }
.range__btn { width: 90px; height: 47px; border-radius: 3px; background: #f5f5f5; }
.range__btn--on { color: #e3b54c; }
.revenue { display: flex; align-items: flex-start; padding-bottom: 22px; }
.revenue__sum {
  display: flex;
  align-items: center;
  padding: 34px 0 0 16px;
  color: #555;
  font-size: 22px;
}
.revenue__num { color: #e0b64e; font-size: 40px; font-weight: 400; }
.compare {
  display: flex;
  align-items: center;
  gap: 16px;
  margin-left: auto;
  padding-right: 2px;
  color: #555;
  font-size: 20px;
  line-height: 26px;
}

.counts { display: grid; grid-template-columns: 1fr 1fr; gap: 16px; margin: 38px 0 16px; }
.count {
  display: flex;
  align-items: center;
  gap: 16px;
  height: 111px;
  padding-left: 16px;
  border-radius: 10px;
  background: #ecf5fe;
}
.count--violet { background: #f3f2f9; }
.count__text { color: #444; font-size: 22px; line-height: 36px; }
.count__text dd { font-size: 20px; }
.count__num { margin-right: 2px; color: #111; font-size: 30px; }
.figures { display: grid; grid-template-columns: 180fr 207fr 180fr; }
.figure + .figure {
  padding-left: 27px;
  background: linear-gradient(#e8e8e8, #e8e8e8) 0 26px / 1px 34px no-repeat;
}
.figure dt { color: #999; font-size: 22px; }
.figure dd { margin-top: 5px; font-size: 30px; line-height: 40px; }

.service { position: absolute; top: 861px; right: 0; }

.dock { margin-top: auto; padding-top: 8px; background: #fff; }
.tabs { display: grid; grid-template-columns: repeat(5, 1fr); margin-bottom: 42px; }
.tab {
  display: flex;
  flex-direction: column;
  align-items: center;
  gap: 4px;
  color: #444;
  font-size: 16px;
  font-weight: 500;
  line-height: 20px;
}
.tab--on { color: #e3b04a; }

/* Navigation bar shared by the inner screens */
.bar {
  display: grid;
  grid-template-columns: 1fr auto 1fr;
  align-items: center;
  height: 64px;
  padding: 0 20px;
}
.bar > :first-child { justify-self: start; margin-left: 7px; }
.bar > :last-child { justify-self: end; }
.bar__title { font-size: 28px; font-weight: 500; }
.bar__link { color: #ebb640; font-size: 26px; }
.bar__filter { display: flex; align-items: center; gap: 9px; color: #333; }
.records .bar { padding: 0 16px; }
.records .bar > :first-child { margin-left: 11px; }

/* Scan */
.search {
  display: flex;
  align-items: center;
  height: 79px;
  margin: 25px 16px 21px;
  padding: 0 10px 0 20px;
  border-radius: 8px;
  background: #f4f5fa;
}
.search__rule { width: 1px; height: 34px; margin: 0 25px 0 18px; background: #d4d5da; }
.search__caret { width: 2px; height: 38px; margin-right: -3px; background: #efb63e; }
.search__input {
  flex: 1;
  min-width: 0;
  padding: 0;
  border: 0;
  outline: 0;
  background: none;
  font-size: 26px;
}
.search__input::placeholder { color: #999; opacity: 1; }
.search__go { width: 106px; height: 59px; border-radius: 6px; background: #f2b840; color: #222; }
.camera { flex: 1; padding: 196px 74px 40px; background: #7f7f7f; }
.finder { position: relative; aspect-ratio: 1; margin: 0 1px; background: #fff; }
.finder__corner { position: absolute; width: 55px; height: 56px; border: 0 solid #f2b840; }
.finder__corner--tl { top: 0; left: 0; border-width: 5px 0 0 5px; }
.finder__corner--tr { top: 0; right: 0; border-width: 5px 5px 0 0; }
.finder__corner--bl { bottom: 0; left: 0; border-width: 0 0 5px 5px; }
.finder__corner--br { bottom: 0; right: 0; border-width: 0 5px 5px 0; }
.finder__beam {
  position: absolute;
  right: 25px;
  bottom: 41px;
  left: 25px;
  height: 5px;
  background: linear-gradient(to right, transparent, #f2b840, transparent);
}
.camera__tip { margin-top: 41px; color: #fff; font-size: 22px; text-align: center; white-space: nowrap; }

/* Records */
.records { background: #f4f5fa; }
.records > .home-bar { margin-bottom: 14px; }
.top { padding-bottom: 4px; background: #fff; }
.list { display: grid; gap: 17px; margin-bottom: auto; padding: 17px 16px 0 15px; }
.ticket { border-radius: 14px; background: #fff; }
.ticket--cut { min-height: 294px; }
.ticket__code {
  display: flex;
  align-items: center;
  height: 70px;
  padding: 2px 0 0 20px;
  border-bottom: 1px solid #e6e6e8;
  color: #7b7e8e;
}
.digits { font-size: 23px; }
.ticket__row { display: flex; align-items: center; height: 74px; padding: 0 21px 2px 20px; }
.ticket__name { margin: 0 6px 0 10px; font-size: 26px; font-weight: 500; white-space: nowrap; }
.ticket__qty { color: #555; }
.ticket__paid { margin-left: auto; color: #2b2d42; font-size: 22px; white-space: nowrap; }
.ticket__paid strong { color: #d3202f; font-size: 28px; font-weight: 500; }
.logo { position: relative; }
.logo__text { position: absolute; inset: 0; font-size: 11px; line-height: 28px; text-align: center; white-space: nowrap; }
.ticket__info {
  display: flex;
  justify-content: space-between;
  align-items: center;
  height: 54px;
  margin: 0 21px 0 20px;
  padding: 2px 13px 0 18px;
  border-radius: 6px;
  background: linear-gradient(to right, #f3f7fe, #fff);
  color: #7b7e8e;
  font-size: 20px;
  white-space: nowrap;
}
.ticket__time { display: flex; align-items: center; width: 312px; }
.ticket__actions { display: flex; justify-content: flex-end; gap: 18px; padding: 17px 20px 21px; }
.ticket__actions--done { padding-right: 16px; }
.btn {
  position: relative;
  width: 136px;
  height: 58px;
  border: 2px solid #dcdcdc;
  border-radius: 9px;
  background: none;
  color: #444;
}
.btn--gold { border-color: #e8bb42; color: #e3b22f; }
.btn--marked::after {
  content: "";
  position: absolute;
  inset: -19px -21px -16px;
  border: 7px solid #ec4226;
  border-radius: 9px;
}

/* Filter sheet */
.records--dim { overflow: hidden; }
.shade { position: absolute; inset: 0; background: rgba(0, 0, 0, 0.5); }
.sheet {
  position: absolute;
  right: 0;
  bottom: 0;
  left: 0;
  border-radius: 24px 24px 0 0;
  background: #fff;
}
.sheet__head {
  display: grid;
  grid-template-columns: 1fr auto 1fr;
  align-items: center;
  height: 92px;
  padding: 0 23px;
}
.sheet__head > :first-child { justify-self: start; }
.sheet__head > :last-child { justify-self: end; }
.sheet__reset { color: #eab731; font-size: 26px; }
.sheet__label { margin: 33px 22px 18px; font-size: 24px; font-weight: 500; line-height: 30px; }
.pill {
  display: flex;
  align-items: center;
  justify-content: center;
  height: 58px;
  border-radius: 29px;
  background: #f4f5fa;
  color: #222;
}
.pill--date { gap: 20px; width: 269px; margin-left: 22px; }
.pill--first { justify-content: flex-start; padding-left: 48px; }
.pill__box { position: absolute; opacity: 0; }
.sources { display: grid; grid-template-columns: repeat(3, 1fr); gap: 19px; margin: 0 24px 0 22px; }
.confirm {
  display: block;
  width: calc(100% - 48px);
  height: 75px;
  margin: 172px 19px 52px 29px;
  border-radius: 14px;
  background: #f4b944;
  font-size: 26px;
}
.sheet .home-bar { margin-bottom: 13px; }
```
